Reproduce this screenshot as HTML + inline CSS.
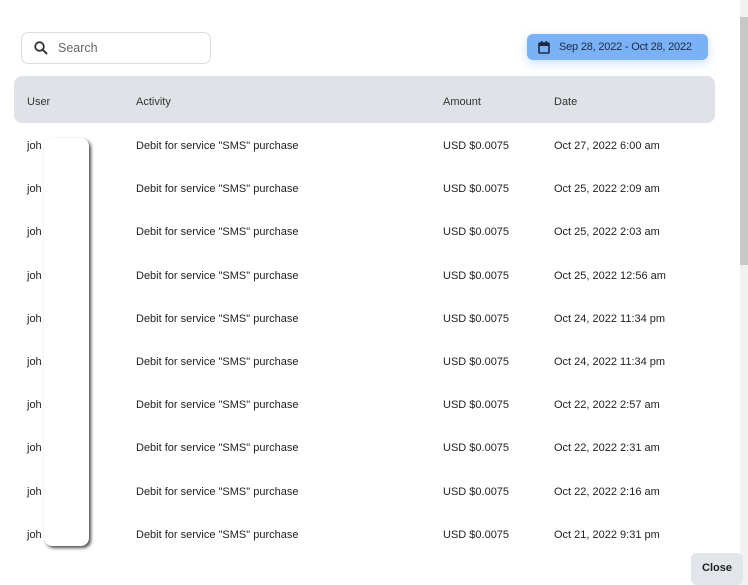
<!DOCTYPE html>
<html><head><style>
*{margin:0;padding:0;box-sizing:border-box}
body{width:748px;height:585px;background:#fff;font-family:"Liberation Sans",sans-serif;font-size:11px;color:#222;position:relative;overflow:hidden}
.search{position:absolute;left:21px;top:32px;width:190px;height:32px;border:1px solid #dcdcdc;border-radius:7px}
.search span{position:absolute;left:36px;top:8px;font-size:12.5px;color:#666}
.date{position:absolute;left:527px;top:34px;width:181px;height:26px;background:#7ab1f7;border-radius:6px;box-shadow:0 3px 10px rgba(122,177,247,.4);font-size:11px;color:#1c2a44}
.date span{position:absolute;left:32px;top:7px;letter-spacing:-0.2px}
.head{position:absolute;left:14px;top:76px;width:701px;height:47px;background:#dfe2e7;border-radius:8px;color:#333}
.t{position:absolute;white-space:nowrap;line-height:12px}
.sb{position:absolute;left:740px;top:0;width:8px;height:585px;background:#f1f1f1}
.thumb{position:absolute;left:740px;top:17px;width:8px;height:248px;background:#c8c8c8}
.mask{position:absolute;left:44px;top:138px;width:45px;height:408px;background:#fff;border-radius:8px;box-shadow:2px 2px 3px rgba(0,0,0,.7)}
.close{position:absolute;left:691px;top:553px;width:52px;height:32px;background:#e2e5ea;border-radius:6px;font-weight:bold;font-size:11px;text-align:center;line-height:30px;color:#222}
</style></head><body>
<div class="search"><svg style="position:absolute;left:12px;top:8px" width="14" height="14" viewBox="0 0 14 14"><circle cx="5.5" cy="5.5" r="4.3" fill="none" stroke="#333" stroke-width="1.8"/><path d="M8.7 8.7L13 13" stroke="#333" stroke-width="2"/></svg><span>Search</span></div>
<div class="date"><svg style="position:absolute;left:11px;top:7px" width="12" height="13" viewBox="0 0 12 13"><rect x="1" y="2" width="10" height="10" rx="1" fill="none" stroke="#1c2a44" stroke-width="1.6"/><rect x="1" y="2" width="10" height="3" fill="#1c2a44"/><rect x="3" y="0" width="1.5" height="3" fill="#1c2a44"/><rect x="7.5" y="0" width="1.5" height="3" fill="#1c2a44"/></svg><span>Sep 28, 2022 - Oct 28, 2022</span></div>
<div class="head"></div>
<div class="t" style="left:27px;top:96px;color:#333">User</div>
<div class="t" style="left:136px;top:96px;color:#333">Activity</div>
<div class="t" style="left:443px;top:96px;color:#333">Amount</div>
<div class="t" style="left:554px;top:96px;color:#333">Date</div>
<div id="rows"></div>
<div class="mask"></div>
<div class="sb"></div><div class="thumb"></div>
<div class="close">Close</div>
<script>
var d=["Oct 27, 2022 6:00 am","Oct 25, 2022 2:09 am","Oct 25, 2022 2:03 am","Oct 25, 2022 12:56 am","Oct 24, 2022 11:34 pm","Oct 24, 2022 11:34 pm","Oct 22, 2022 2:57 am","Oct 22, 2022 2:31 am","Oct 22, 2022 2:16 am","Oct 21, 2022 9:31 pm"];
var h="";for(var i=0;i<10;i++){var y=Math.round(140+i*43.2);
h+='<div class="t" style="left:27px;top:'+y+'px">joh</div><div class="t" style="left:136px;top:'+y+'px">Debit for service "SMS" purchase</div><div class="t" style="left:443px;top:'+y+'px">USD $0.0075</div><div class="t" style="left:554px;top:'+y+'px">'+d[i]+'</div>';}
document.getElementById("rows").innerHTML=h;
</script>
</body></html>
